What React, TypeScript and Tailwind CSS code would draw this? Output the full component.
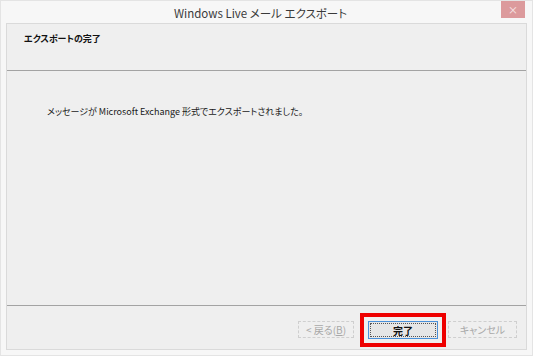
import React from 'react';

const jp = {
  fontFamily: '"Noto Sans CJK JP", "Noto Sans", sans-serif',
  fontFeatureSettings: '"palt"',
};

export default function App() {
  return (
    <div className="w-[533px] h-[356px] bg-[#f7f7f7] flex flex-col border border-[#e4e4e4]" style={jp}>
      {/* Title bar */}
      <div className="relative h-[22px] flex items-center justify-center shrink-0">
        <span className="text-[11.5px] text-[#3a3a3a] leading-none mt-[3px] mr-[12px]">Windows Live メール エクスポート</span>
        <div className="absolute right-[7px] top-0 w-[24px] h-[17px] bg-[#dc9a9c] flex items-center justify-center">
          <span className="text-white/80 text-[10px] leading-none">×</span>
        </div>
      </div>

      {/* Content */}
      <div className="flex-1 mx-[5px] mb-[5px] border border-[#dadada] bg-[#efefef] flex flex-col">
        <div className="h-[47px] shrink-0 border-b border-[#a3a3a3] pl-[17px] pt-[9px] text-[9px] leading-[12px] font-bold text-[#111]">
          エクスポートの完了
        </div>

        <div className="flex-1 pl-[40px] pt-[35px] text-[9px] leading-[12px] text-[#1a1a1a]">
          メッセージが Microsoft Exchange 形式でエクスポートされました。
        </div>

        <div className="h-[44px] shrink-0 border-t border-[#a3a3a3] flex items-start pt-[7px] pl-[291px]">
          <div className="mt-[8px] w-[56px] h-[17px] border border-dashed border-[#cfcfcf] flex items-center justify-center text-[10px] text-[#a8a8a8]">
            &lt; 戻る(<u>B</u>)
          </div>
          <div className="ml-[6px] border-[4px] border-[#ee0000] p-[4px]">
            <div className="w-[70px] h-[18px] border border-[#4a90d9] bg-[#e6e6e6] flex items-center justify-center">
              <div className="w-[66px] h-[14px] border border-dotted border-[#555] flex items-center justify-center text-[10px] font-bold text-[#111]">
                完了
              </div>
            </div>
          </div>
          <div className="ml-[2px] mt-[8px] w-[69px] h-[17px] border border-dashed border-[#cfcfcf] flex items-center justify-center text-[10px] text-[#a8a8a8]">
            キャンセル
          </div>
        </div>
      </div>
    </div>
  );
}
